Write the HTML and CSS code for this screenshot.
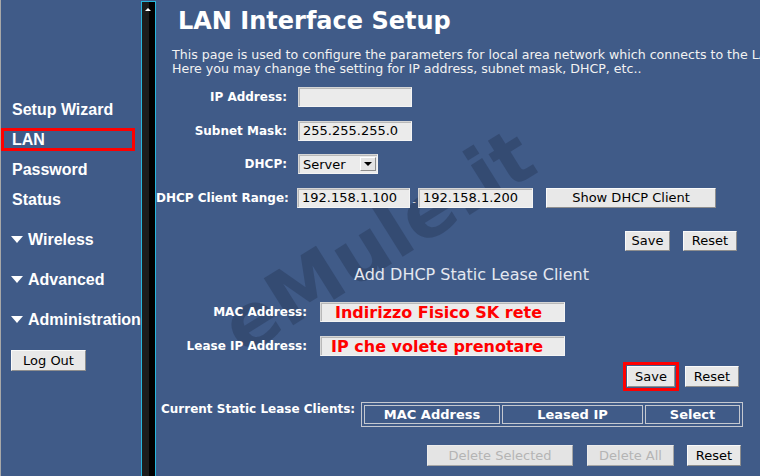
FILE: index.html
```html
<!DOCTYPE html>
<html lang="en">
<head>
    <meta charset="UTF-8">
    <title>LAN Interface Setup</title>
    <link rel="stylesheet" href="styles.css">
</head>
<body>
    <div class="frames">
        <aside class="menu">
            <div class="nav-item">Setup Wizard</div>
            <div class="nav-item marked">LAN</div>
            <div class="nav-item">Password</div>
            <div class="nav-item">Status</div>
            <div class="nav-item folder"><span class="arrow"></span>Wireless</div>
            <div class="nav-item folder"><span class="arrow"></span>Advanced</div>
            <div class="nav-item folder"><span class="arrow"></span>Administration</div>
            <button class="btn logout">Log Out</button>
        </aside>

        <div class="splitter"><span class="up"></span></div>

        <main class="content">
            <div class="watermark">eMule.it</div>

            <h1>LAN Interface Setup</h1>
            <p class="intro">This page is used to configure the parameters for local area network which connects to the LAN<br>Here you may change the setting for IP address, subnet mask, DHCP, etc..</p>

            <div class="field-row first">
                <label>IP Address:</label>
                <input class="text-box" type="text" value="">
            </div>
            <div class="field-row">
                <label>Subnet Mask:</label>
                <input class="text-box" type="text" value="255.255.255.0">
            </div>
            <div class="field-row">
                <label>DHCP:</label>
                <span class="select-box">Server<span class="drop"><span class="caret"></span></span></span>
            </div>
            <div class="field-row">
                <label>DHCP Client Range:</label>
                <input class="text-box range" type="text" value="192.158.1.100">
                <span class="dash">-</span>
                <input class="text-box range wide" type="text" value="192.158.1.200">
                <button class="btn show-client">Show DHCP Client</button>
            </div>

            <div class="button-row apply-row">
                <button class="btn save">Save</button>
                <button class="btn reset">Reset</button>
            </div>

            <h2 class="section-title">Add DHCP Static Lease Client</h2>

            <div class="field-row lease first-lease">
                <label>MAC Address:</label>
                <span class="text-box note mac">Indirizzo Fisico SK rete</span>
            </div>
            <div class="field-row lease">
                <label>Lease IP Address:</label>
                <span class="text-box note ip">IP che volete prenotare</span>
            </div>

            <div class="button-row lease-apply">
                <span class="marked-btn"><button class="btn save tall">Save</button></span>
                <button class="btn reset tall">Reset</button>
            </div>

            <div class="clients">
                <span class="clients-label">Current Static Lease Clients:</span>
                <table class="lease-table">
                    <tr>
                        <th class="col-mac">MAC Address</th>
                        <th class="col-ip">Leased IP</th>
                        <th class="col-sel">Select</th>
                    </tr>
                </table>
            </div>

            <div class="button-row delete-row">
                <button class="btn tall off del-sel" disabled>Delete Selected</button>
                <button class="btn tall off del-all" disabled>Delete All</button>
                <button class="btn tall reset">Reset</button>
            </div>
        </main>
    </div>
</body>
</html>
```

FILE: styles.css
```css
body {
    margin: 0;
    width: 760px;
    height: 476px;
    overflow: hidden;
    background-color: #405b88;
    color: #fff;
    font-family: "DejaVu Sans", Verdana, sans-serif;
}

.frames {
    display: flex;
    height: 476px;
}

/* left menu frame */
.menu {
    width: 139px;
    flex-shrink: 0;
    border-left: 1px solid #a8a8a8;
    padding-top: 94.5px;
    font-family: "Liberation Sans", Arial, sans-serif;
    font-size: 16px;
    font-weight: bold;
}

.nav-item {
    height: 30px;
    line-height: 30px;
    padding-left: 11px;
    white-space: nowrap;
}

.nav-item.marked {
    box-sizing: border-box;
    width: 134px;
    height: 23px;
    line-height: 17px;
    margin: 3.5px 0;
    padding-left: 8px;
    border: 3px solid #ff0000;
}

.nav-item.folder {
    margin-top: 10px;
    padding-left: 10px;
}

.arrow {
    display: inline-block;
    width: 0;
    height: 0;
    border-left: 6px solid transparent;
    border-right: 6px solid transparent;
    border-top: 7px solid #fff;
    margin-right: 5px;
    vertical-align: 2px;
}

/* frame splitter */
.splitter {
    position: relative;
    width: 13px;
    flex-shrink: 0;
    margin: 1px 0 0 1px;
    border: 1px solid #27b6dc;
    border-bottom: none;
    background: linear-gradient(to right, #1c1c1c 7px, #000 7px);
}

.up {
    position: absolute;
    left: 3px;
    top: 6px;
    border-left: 3px solid transparent;
    border-right: 3px solid transparent;
    border-bottom: 3px solid #fff;
}

/* right content frame */
.content {
    position: relative;
    flex: 1;
    min-width: 0;
    overflow: hidden;
    white-space: nowrap;
}

.watermark {
    position: absolute;
    left: 222px;
    top: 241px;
    transform: translate(-50%, -50%) rotate(-32deg);
    font-size: 76px;
    font-weight: bold;
    color: #33496f;
    opacity: 0.85;
}

h1 {
    position: relative;
    margin: 7px 0 0 22px;
    font-size: 24px;
    line-height: 28px;
}

.intro {
    position: relative;
    margin: 13px 0 0 16px;
    font-size: 12.6px;
    line-height: 14px;
    color: #f2f2f2;
}

.field-row {
    position: relative;
    display: flex;
    align-items: center;
    height: 20px;
    margin-top: 13.5px;
}

.field-row.first {
    margin-top: 11px;
}

.field-row label {
    width: 131px;
    margin-right: 11px;
    text-align: right;
    font-size: 12px;
    font-weight: bold;
}

.text-box {
    box-sizing: border-box;
    width: 114px;
    height: 20px;
    padding: 0 4px;
    border: 1px solid;
    border-color: #d6d6d6 #f4f4f4 #f4f4f4 #d6d6d6;
    box-shadow: inset 1px 1px 0 #b8b8b8;
    background-color: #ebebeb;
    font-family: "DejaVu Sans", Verdana, sans-serif;
    font-size: 13px;
    color: #000;
    outline: none;
}

.text-box.range {
    width: 113px;
    margin-left: -1px;
}

.text-box.wide {
    width: 115px;
    margin-left: 0;
}

.dash {
    width: 8px;
    align-self: flex-end;
    text-align: center;
    font-size: 10px;
    line-height: 12px;
    color: #d8d8d8;
}

.select-box {
    box-sizing: border-box;
    display: flex;
    align-items: center;
    justify-content: space-between;
    width: 80px;
    height: 20px;
    padding: 0 1px 0 4px;
    border: 1px solid;
    border-color: #d6d6d6 #f4f4f4 #f4f4f4 #d6d6d6;
    box-shadow: inset 1px 1px 0 #b8b8b8;
    background-color: #ebebeb;
    font-size: 13px;
    color: #000;
}

.drop {
    box-sizing: border-box;
    display: flex;
    align-items: center;
    justify-content: center;
    width: 16px;
    height: 14px;
    border: 1px solid;
    border-color: #fff #8c8c8c #8c8c8c #fff;
    background-color: #e4e4e4;
}

.caret {
    border-left: 4px solid transparent;
    border-right: 4px solid transparent;
    border-top: 4px solid #000;
}

.btn {
    box-sizing: border-box;
    height: 20px;
    padding: 0;
    border: 1px solid;
    border-color: #fafafa #8e8e8e #8e8e8e #fafafa;
    background-color: #e8e8e8;
    font-family: "DejaVu Sans", Verdana, sans-serif;
    font-size: 13px;
    color: #000;
}

.btn.tall {
    height: 21px;
}

.logout {
    display: block;
    width: 75px;
    height: 21px;
    margin: 15.5px 0 0 10px;
    font-weight: normal;
}

.show-client {
    width: 170px;
    margin-left: 13px;
}

.button-row {
    position: relative;
    display: flex;
    align-items: center;
}

.apply-row {
    margin-top: 23px;
    padding-left: 469px;
    gap: 13px;
}

.save {
    width: 45px;
}

.reset {
    width: 54px;
}

.section-title {
    position: relative;
    margin: 14.5px 0 0 198px;
    font-size: 16px;
    font-weight: normal;
    line-height: 20px;
    color: #e4e8f0;
}

.field-row.lease {
    margin-top: 14px;
}

.field-row.lease.first-lease {
    margin-top: 17px;
}

.field-row.lease label {
    width: 151px;
    margin-right: 13px;
}

.text-box.note {
    display: flex;
    align-items: center;
    width: 245px;
    font-size: 16px;
    font-weight: bold;
    color: #ff0000;
}

.text-box.mac {
    padding-left: 14px;
}

.text-box.ip {
    padding-left: 10px;
}

.lease-apply {
    margin-top: 6px;
    padding-left: 467px;
}

.marked-btn {
    display: flex;
    padding: 1px;
    border: 3px solid #ff0000;
}

.marked-btn .save {
    width: 48px;
}

.lease-apply .reset {
    margin-left: 6px;
}

.clients {
    position: relative;
    display: flex;
    align-items: flex-start;
    margin-top: 11px;
}

.clients-label {
    box-sizing: border-box;
    width: 205px;
    padding-left: 5px;
    font-size: 12px;
    font-weight: bold;
    line-height: 15px;
}

.lease-table {
    border: 1px solid #c4c8d0;
    border-spacing: 2px;
}

.lease-table th {
    box-sizing: border-box;
    height: 19px;
    padding: 0;
    border: 1px solid #c4c8d0;
    font-size: 13px;
    font-weight: bold;
    color: #fff;
}

.col-mac {
    width: 136px;
}

.col-ip {
    width: 141px;
}

.col-sel {
    width: 95px;
}

.delete-row {
    margin-top: 18px;
    padding-left: 271px;
    gap: 14px;
}

.btn.off {
    color: #b4b4b4;
    background-color: #e4e4e4;
    border-color: #ececec #a6a6a6 #a6a6a6 #ececec;
}

.del-sel {
    width: 146px;
}

.del-all {
    width: 87px;
}

.delete-row .reset {
    margin-left: -1px;
}
```
